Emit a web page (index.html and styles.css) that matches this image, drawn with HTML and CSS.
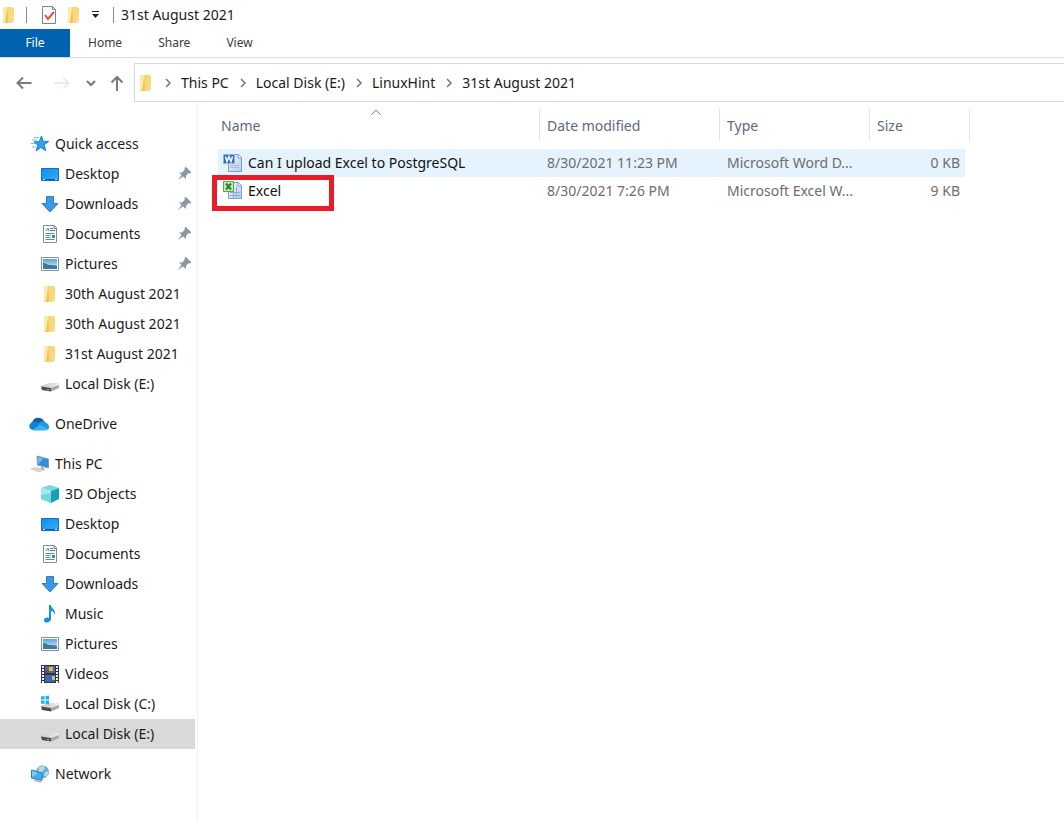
FILE: index.html
```html
<!DOCTYPE html>
<html lang="en">
<head>
<meta charset="utf-8">
<title>31st August 2021</title>
<link rel="stylesheet" href="styles.css">
</head>
<body>
<svg class="sprite" aria-hidden="true">
  <defs>
    <linearGradient id="g-blue" x1="0" y1="0" x2="1" y2="1"><stop offset="0" stop-color="#0a8ef0"/><stop offset="1" stop-color="#35aefb"/></linearGradient>
    <linearGradient id="g-sky" x1="0" y1="0" x2="0" y2="1"><stop offset="0" stop-color="#5f9fe0"/><stop offset="1" stop-color="#e4f2f8"/></linearGradient>
    <linearGradient id="g-disk" x1="0" y1="0" x2="1" y2="0"><stop offset="0" stop-color="#c9c9c9"/><stop offset="1" stop-color="#ececec"/></linearGradient>
    <linearGradient id="g-page" x1="0" y1="0" x2="1" y2="1"><stop offset="0" stop-color="#f6faff"/><stop offset="1" stop-color="#b3c9ee"/></linearGradient>
  </defs>
  <symbol id="folder" viewBox="0 0 18 18">
    <path d="M3 1h9l2 1v13l-2 2H3z" fill="#f7d778"/><path d="M3 1h4v16l-4-1z" fill="#ffe9a8"/><path d="M7 2.500l1 12.500L7 17H5z" fill="#edc35b"/><path d="M11 9h3v7h-3z" fill="#f9dc8b"/>
  </symbol>
  <symbol id="star" viewBox="0 0 18 18">
    <path d="M10.500 1l1.700 5.300 5.300.2-4.300 3.500 1.600 5.800-4.800-3.300L5 16l2-5.700L3 6.900l5.300-.3z" fill="#2ba3ea" stroke="#1683cb"/>
    <path d="M3 2.500h5M1 5h5M0 8.500h4M1 12h4" stroke="#79b9e5"/>
  </symbol>
  <symbol id="desktop" viewBox="0 0 18 18">
    <path d="M.5 3.500h17v12H.5z" fill="url(#g-blue)" stroke="#176fba"/><path d="M1 14.500h16" stroke="#0d5a9b"/><path d="M2 14.500h2M14 14.500h2" stroke="#c9e9ff"/>
  </symbol>
  <symbol id="down" viewBox="0 0 18 18">
    <path d="M5.500 1.500h7v7h4.500L9 17 1 8.500h4.500z" fill="#3c97e4" stroke="#2c7fca"/>
  </symbol>
  <symbol id="doc" viewBox="0 0 18 18">
    <path d="M2.500.5h11l2 2v15h-13z" fill="#fff" stroke="#858b90"/><path d="M13 .5v3h3" fill="#d6dadc" stroke="#858b90"/><path d="M5 6l2-3 1 3M9 3.500h3M9 5.500h5" stroke="#3a87bd" fill="none"/><path d="M4.500 8.500h9M4.500 10.500h5M4.500 12.500h5M4.500 14.500h9" stroke="#4d8fb9"/><path d="M11 10h3v3h-3z" fill="#3f83b5"/>
  </symbol>
  <symbol id="picture" viewBox="0 0 18 18">
    <path d="M.5 2.500h17v13H.5z" fill="#fff" stroke="#8093ae"/><path d="M2 4h14v10H2z" fill="url(#g-sky)"/><path d="M2 8c3 0 4 2 7 2s5 0 7 1v3H2z" fill="#3d7d74"/><path d="M2 12c5-1 9 0 14-1v3H2z" fill="#3f78aa"/>
  </symbol>
  <symbol id="disk" viewBox="0 0 18 18">
    <path d="M0 11l8-3h10v2l-8 4H2l-2-2z" fill="url(#g-disk)"/><path d="M0 11.500l10 1.500v3.500L1 15z" fill="#4a4d4c"/><path d="M10 13l8-3v3l-8 3.500z" fill="#a7a8a8"/><path d="M6 14.500l2 .3" stroke="#8cd07d"/>
  </symbol>
  <symbol id="windisk" viewBox="0 0 18 18">
    <path d="M0 11l8-3h10v2l-8 4H2l-2-2z" fill="url(#g-disk)"/><path d="M0 11.500l10 1.500v3.500L1 15z" fill="#4a4d4c"/><path d="M10 13l8-3v3l-8 3.500z" fill="#a7a8a8"/>
    <path d="M0 1.500L3.500 1v3.500H0zM4.500 1L8 .5v4H4.500zM0 5.500h3.500V9L0 8.500zM4.500 5.500H8v4L4.500 9z" fill="#18b3e8"/>
  </symbol>
  <symbol id="cloud" viewBox="0 0 20 14">
    <path d="M3 6c1-6 9-7 12-2l1 3-7 4z" fill="#0f5fb5"/><path d="M4 5c4-1 6 1 8 3l-8 5C-1 12-1 6 4 5z" fill="#1580d4"/><path d="M9 8c2-5 7-5 8-2 4 1 4 7 0 7H9z" fill="#1c98e6"/><path d="M3 13l8-5 8 4c-1 1-2 1.500-3 1.500H5z" fill="#35b5f2"/>
  </symbol>
  <symbol id="pc" viewBox="0 0 18 18">
    <path d="M6 1l11.500 3v9L6.500 10z" fill="#2f91dc" stroke="#8a9aa8"/><path d="M6.500 2l6 1.500L7.500 9z" fill="#74baf0"/><path d="M10 12l3 1v2l-3-1z" fill="#8b949a"/><path d="M0 14l5-1.500 9 2L8 17z" fill="#dcd9d5" stroke="#b9b5b0" stroke-width=".5"/>
  </symbol>
  <symbol id="cube" viewBox="0 0 18 18">
    <path d="M9 0l9 3-8 3-10-3z" fill="#72d7e0"/><path d="M0 3l10 3v12L0 14z" fill="#a4e9ec"/><path d="M10 6l8-3v11l-8 4z" fill="#14a0ba"/><path d="M0 10l10-2v10L0 14z" fill="#6fd6dc"/>
  </symbol>
  <symbol id="music" viewBox="0 0 18 18">
    <path d="M8 0h2c0 4 5 4 4 10-1-3-2-4-4-4v8c0 4-7 5-7 1 0-2 3-3 5-2z" fill="#168ee1"/>
  </symbol>
  <symbol id="video" viewBox="0 0 18 18">
    <path d="M0 0h18v18H0z" fill="#303544"/><path d="M4 1h10v7H4z" fill="#5366a0"/><path d="M4 10h10v7H4z" fill="#3c68b9"/><path d="M8 2h4v4H8zM11 11h3v4h-3z" fill="#dfbd3d"/><path d="M4 5h4v3H4z" fill="#8e4156"/><path d="M2 1v17M16 1v17" stroke="#f1f1f1" stroke-width="2" stroke-dasharray="2 1"/>
  </symbol>
  <symbol id="network" viewBox="0 0 18 18">
    <circle cx="11.500" cy="7" r="6.500" fill="#69a9c9"/><path d="M8 2l5-1 1 3-4 4-3-2zM14 7l4-1-2 6-3-1z" fill="#b5dae5"/><path d="M.5 5l10.500 3v7.500L.5 13z" fill="#45aeea" stroke="#267db8"/><path d="M1 6l6 2-6 4z" fill="#80cbf5"/><path d="M3 15l7 2" stroke="#b5bfc4" stroke-width="2"/>
  </symbol>
  <symbol id="pin" viewBox="0 0 14 14">
    <path d="M8 1l5 5-2 .5-2 2.500v3L6 9.500 1 13l3.500-5L2 5.500h3L7.500 3z" fill="#8b98a3"/><path d="M8 .5l5.500 5.500" stroke="#8b98a3" stroke-width="2"/>
  </symbol>
  <symbol id="check-doc" viewBox="0 0 16 20">
    <path d="M1.500 1.500h10l3 3v14h-13z" fill="#fafbfc" stroke="#7b8490"/><path d="M11.500 1.500v3h3" fill="none" stroke="#7b8490"/><path d="M4 10l3 4 6-7" fill="none" stroke="#dc552e" stroke-width="2"/>
  </symbol>
  <symbol id="word" viewBox="0 0 20 20">
    <path d="M5.500 1.500h10l3 3v14h-13z" fill="url(#g-page)" stroke="#7e9dcc"/><path d="M15 1.500v3.500h3.500" fill="#fff" stroke="#7e9dcc"/><path d="M7 12.500h9M7 14.500h9" stroke="#a3bbe2"/><path d="M.5 1.500h11v9H.5z" fill="#2f6cc4" stroke="#8fb3e6"/><path d="M2.500 3.500l1.500 5 2-5 2 5 1.500-5" fill="none" stroke="#fff" stroke-width="1.500"/>
  </symbol>
  <symbol id="excel" viewBox="0 0 20 20">
    <path d="M5.500 1.500h10l3 3v13h-13z" fill="url(#g-page)" stroke="#7e9dcc"/><path d="M15 1.500v3.500h3.500" fill="#fff" stroke="#7e9dcc"/><path d="M7 11.500h10M7 14.500h10M10.500 10v7M13.500 6v10" stroke="#8eaad6"/><path d="M.5.5h10v10H.5z" fill="#c9e8bd" stroke="#5ba447"/><path d="M3 2.500l5 6M8 2.500l-5 6" stroke="#278223" stroke-width="2"/>
  </symbol>
  <symbol id="chevron" viewBox="0 0 8 10"><path d="M2 1l4 4-4 4" fill="none" stroke="#777" stroke-width="1.500"/></symbol>
</svg>

<header class="titlebar">
  <svg class="icon"><use href="#folder"/></svg>
  <span class="rule"></span>
  <button class="tool" aria-label="Properties"><svg class="check"><use href="#check-doc"/></svg></button>
  <button class="tool" aria-label="New folder"><svg class="icon"><use href="#folder"/></svg></button>
  <button class="tool more" aria-label="Customize toolbar"><svg viewBox="0 0 9 8"><path d="M1 .5h7" stroke="#222"/><path d="M1 3h7L4.500 7z" fill="#222"/></svg></button>
  <span class="rule"></span>
  <h1 class="title">31st August 2021</h1>
</header>
<nav class="tabs" aria-label="Ribbon">
  <button class="tab file">File</button><button class="tab">Home</button><button class="tab">Share</button><button class="tab">View</button>
</nav>
<div class="navbar">
  <div class="arrows">
    <button class="tool" aria-label="Back"><svg class="arrow" viewBox="0 0 16 16"><path d="M15.500 8H1.500M7 2.500L1.500 8 7 13.500"/></svg></button>
    <button class="tool" aria-label="Forward" disabled><svg class="arrow" viewBox="0 0 16 16"><path d="M.5 8h14M9 2.500L14.500 8 9 13.500"/></svg></button>
    <button class="tool" aria-label="Recent"><svg class="recent" viewBox="0 0 10 10"><path d="M1 3l4 4 4-4"/></svg></button>
    <button class="tool" aria-label="Up"><svg class="up" viewBox="0 0 14 16"><path d="M7 16V2M1.500 7.500L7 2l5.500 5.500"/></svg></button>
  </div>
  <nav class="address" aria-label="Address">
    <svg class="icon"><use href="#folder"/></svg>
    <svg class="chev"><use href="#chevron"/></svg><a href="#">This PC</a>
    <svg class="chev"><use href="#chevron"/></svg><a href="#">Local Disk (E:)</a>
    <svg class="chev"><use href="#chevron"/></svg><a href="#">LinuxHint</a>
    <svg class="chev"><use href="#chevron"/></svg><a href="#">31st August 2021</a>
  </nav>
</div>
<div class="body">
  <nav class="sidebar" aria-label="Folders">
    <ul class="group">
      <li><a class="item root" href="#"><svg class="icon"><use href="#star"/></svg>Quick access</a></li>
      <li><a class="item" href="#"><svg class="icon"><use href="#desktop"/></svg>Desktop<svg class="pin"><use href="#pin"/></svg></a></li>
      <li><a class="item" href="#"><svg class="icon"><use href="#down"/></svg>Downloads<svg class="pin"><use href="#pin"/></svg></a></li>
      <li><a class="item" href="#"><svg class="icon"><use href="#doc"/></svg>Documents<svg class="pin"><use href="#pin"/></svg></a></li>
      <li><a class="item" href="#"><svg class="icon"><use href="#picture"/></svg>Pictures<svg class="pin"><use href="#pin"/></svg></a></li>
      <li><a class="item" href="#"><svg class="icon"><use href="#folder"/></svg>30th August 2021</a></li>
      <li><a class="item" href="#"><svg class="icon"><use href="#folder"/></svg>30th August 2021</a></li>
      <li><a class="item" href="#"><svg class="icon"><use href="#folder"/></svg>31st August 2021</a></li>
      <li><a class="item" href="#"><svg class="icon"><use href="#disk"/></svg>Local Disk (E:)</a></li>
    </ul>
    <ul class="group">
      <li><a class="item root" href="#"><svg class="icon cloud"><use href="#cloud"/></svg>OneDrive</a></li>
    </ul>
    <ul class="group">
      <li><a class="item root" href="#"><svg class="icon"><use href="#pc"/></svg>This PC</a></li>
      <li><a class="item" href="#"><svg class="icon"><use href="#cube"/></svg>3D Objects</a></li>
      <li><a class="item" href="#"><svg class="icon"><use href="#desktop"/></svg>Desktop</a></li>
      <li><a class="item" href="#"><svg class="icon"><use href="#doc"/></svg>Documents</a></li>
      <li><a class="item" href="#"><svg class="icon"><use href="#down"/></svg>Downloads</a></li>
      <li><a class="item" href="#"><svg class="icon"><use href="#music"/></svg>Music</a></li>
      <li><a class="item" href="#"><svg class="icon"><use href="#picture"/></svg>Pictures</a></li>
      <li><a class="item" href="#"><svg class="icon"><use href="#video"/></svg>Videos</a></li>
      <li><a class="item" href="#"><svg class="icon"><use href="#windisk"/></svg>Local Disk (C:)</a></li>
      <li><a class="item current" href="#" aria-current="page"><svg class="icon"><use href="#disk"/></svg>Local Disk (E:)</a></li>
    </ul>
    <ul class="group">
      <li><a class="item root" href="#"><svg class="icon"><use href="#network"/></svg>Network</a></li>
    </ul>
  </nav>
  <main class="files">
    <table class="list">
      <colgroup><col class="c-name"><col class="c-date"><col class="c-type"><col class="c-size"></colgroup>
      <thead>
        <tr>
          <th scope="col" aria-sort="ascending"><span class="head">Name<svg class="sort" viewBox="0 0 10 6"><path d="M.5 5.500L5 1l4.500 4.500"/></svg></span></th>
          <th scope="col"><span class="head">Date modified</span></th>
          <th scope="col"><span class="head">Type</span></th>
          <th scope="col"><span class="head">Size</span></th>
        </tr>
      </thead>
      <tbody>
        <tr class="hover">
          <td><a class="name" href="#"><svg class="file-icon"><use href="#word"/></svg>Can I upload Excel to PostgreSQL</a></td>
          <td>8/30/2021 11:23 PM</td><td>Microsoft Word D...</td><td class="size">0 KB</td>
        </tr>
        <tr>
          <td><a class="name marked" href="#"><svg class="file-icon"><use href="#excel"/></svg>Excel</a></td>
          <td>8/30/2021 7:26 PM</td><td>Microsoft Excel W...</td><td class="size">9 KB</td>
        </tr>
      </tbody>
    </table>
  </main>
</div>
</body>
</html>
```
FILE: styles.css
```css
*, *::after { box-sizing: border-box; }
body {
  margin: 0;
  min-height: 100vh;
  display: flex;
  flex-direction: column;
  background: #fff;
  color: #1b1b1b;
  font: 14px/20px "Noto Sans", "Open Sans", sans-serif;
}
button { font: inherit; color: inherit; background: none; border: 0; padding: 0; }
a { color: inherit; text-decoration: none; }
svg { display: block; flex: none; }
.sprite { position: absolute; width: 0; height: 0; }
.icon { width: 18px; height: 18px; }
.tool { display: flex; align-items: center; justify-content: center; }

.titlebar { display: flex; align-items: center; height: 29px; }
.rule { width: 1px; height: 16px; background: #888; }
.titlebar .rule { margin-left: 8px; }
.check { width: 16px; height: 20px; }
.titlebar .tool { margin-left: 14px; width: 16px; }
.titlebar .tool + .tool { margin-left: 9px; }
.titlebar .more { width: 9px; }
.more svg { width: 9px; height: 8px; }
.titlebar .more + .rule { margin-left: 13px; }
.title { margin: 0 0 0 7px; font-size: 14px; font-weight: 400; }

.tabs { display: flex; height: 29px; border-bottom: 1px solid #dadbdc; font-size: 12px; color: #3b3b3b; }
.tab { padding: 0 18px; }
.file { width: 70px; padding: 0; background: #0063b1; color: #fff; }

.navbar { display: flex; padding-top: 5px; }
.arrows { display: flex; align-items: center; width: 134px; padding-left: 16px; }
.arrows .tool { margin-right: 16px; }
.arrows .tool:first-child { margin-right: 22px; }
.arrows .tool:nth-child(3) { margin-right: 14px; }
.arrows .tool:last-child { margin-right: 0; }
.arrows svg { fill: none; stroke: #7a7a7a; stroke-width: 2; }
.arrows :disabled svg { stroke: #d4d4d4; stroke-width: 1; }
.arrow { width: 16px; height: 16px; }
.recent { width: 10px; height: 10px; }
.up { width: 14px; height: 16px; }
.address { display: flex; flex: 1; align-items: center; height: 39px; padding-left: 2px; border: 1px solid #d9d9d9; border-right: 0; }
.chev { width: 8px; height: 10px; margin: 0 9px; }
.address a + .chev { margin-left: 10px; }

.body { display: flex; flex: 1; }
.sidebar { width: 198px; padding: 27px 2px 24px 0; border-right: 1px solid #f3f3f3; }
.group { margin: 0 0 10px; padding: 0; list-style: none; }
.item { display: flex; align-items: center; gap: 6px; height: 30px; padding: 0 4px 0 41px; }
.root { padding-left: 31px; }
.cloud { width: 20px; height: 14px; margin-left: -2px; }
.current { background: #d9d9d9; }
.pin { width: 14px; height: 14px; margin-left: auto; }

.files { flex: 1; padding: 7px 0 0 20px; }
.list { width: 752px; table-layout: fixed; border-spacing: 0; color: #6d6d6d; }
.c-name { width: 322px; }
.c-date { width: 180px; }
.c-type { width: 150px; }
.c-size { width: 100px; }
th { padding: 0 0 8px; font-weight: 400; text-align: left; color: #5a6a80; }
.head { position: relative; display: flex; align-items: center; height: 32px; padding: 2px 0 0 7px; border-right: 1px solid #e2e2e2; }
th:first-child .head { padding-left: 3px; }
.sort { position: absolute; top: 0; left: 50%; width: 10px; height: 6px; margin-left: -8px; fill: none; stroke: #777; }
td { height: 28px; padding: 0 7px; white-space: nowrap; }
td:first-child { padding: 0; }
.hover td { background: #e5f3ff; }
.name { position: relative; display: flex; align-items: center; gap: 5px; height: 28px; padding-left: 5px; color: #111; }
.file-icon { width: 20px; height: 20px; }
.marked::after { content: ""; position: absolute; top: -2px; left: -6px; width: 122px; height: 36px; border: 5px solid #e81c27; }
td.size { padding-right: 5px; text-align: right; border-right: 5px solid #fff; }
```
